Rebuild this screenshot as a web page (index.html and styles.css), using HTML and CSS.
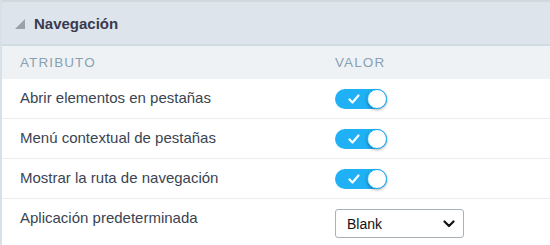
FILE: index.html
```html
<!DOCTYPE html>
<html>
<head>
<meta charset="utf-8">
<link rel="stylesheet" href="styles.css">
</head>
<body>
<div class="panel">
  <div class="panel-head">
    <span class="tri"></span>
    <span class="title">Navegación</span>
  </div>
  <div class="thead">
    <div class="col-a">Atributo</div>
    <div class="col-b">Valor</div>
  </div>
  <div class="row">
    <div class="col-a">Abrir elementos en pestañas</div>
    <div class="col-b"><span class="toggle"><svg class="check" viewBox="0 0 12 10" width="12" height="10"><path d="M1.5 5.5 L4.5 8.5 L10.5 1.5" fill="none" stroke="#fff" stroke-width="2.2" stroke-linecap="round" stroke-linejoin="round"/></svg><span class="knob"></span></span></div>
  </div>
  <div class="row">
    <div class="col-a">Menú contextual de pestañas</div>
    <div class="col-b"><span class="toggle"><svg class="check" viewBox="0 0 12 10" width="12" height="10"><path d="M1.5 5.5 L4.5 8.5 L10.5 1.5" fill="none" stroke="#fff" stroke-width="2.2" stroke-linecap="round" stroke-linejoin="round"/></svg><span class="knob"></span></span></div>
  </div>
  <div class="row">
    <div class="col-a">Mostrar la ruta de navegación</div>
    <div class="col-b"><span class="toggle"><svg class="check" viewBox="0 0 12 10" width="12" height="10"><path d="M1.5 5.5 L4.5 8.5 L10.5 1.5" fill="none" stroke="#fff" stroke-width="2.2" stroke-linecap="round" stroke-linejoin="round"/></svg><span class="knob"></span></span></div>
  </div>
  <div class="row last">
    <div class="col-a">Aplicación predeterminada</div>
    <div class="col-b">
      <div class="select">
        <span>Blank</span>
        <svg viewBox="0 0 12 8" width="12" height="8"><path d="M1.5 1.5 L6 6 L10.5 1.5" fill="none" stroke="#111" stroke-width="2.2" stroke-linecap="round" stroke-linejoin="round"/></svg>
      </div>
    </div>
  </div>
</div>
</body>
</html>
```

FILE: styles.css
```css
* { box-sizing: border-box; }
html, body { margin: 0; padding: 0; background: #fff; }
body { font-family: "Liberation Sans", Arial, sans-serif; width: 550px; height: 245px; overflow: hidden; }
.panel { border-left: 2px solid #d8e1e8; }
.panel-head {
  height: 46px;
  background: #dee4ec;
  border-top: 2px solid #d0dade;
  border-bottom: 2px solid #d0dce0;
  display: flex;
  align-items: center;
  padding-left: 13px;
}
.tri {
  width: 0; height: 0;
  border-left: 10px solid transparent;
  border-bottom: 10px solid #9aa1a8;
  margin-right: 9px;
  margin-top: 1px;
}
.title { font-weight: bold; font-size: 15px; color: #383a4e; }
.thead {
  height: 33px;
  background: #eef2f5;
  display: flex;
  align-items: center;
  font-size: 13.5px;
  text-transform: uppercase;
  letter-spacing: 1.1px;
  color: #88a0b2;
}
.col-a { width: 333px; padding-left: 18px; }
.col-b { flex: 1; display: flex; align-items: center; }
.row {
  height: 40px;
  border-bottom: 1px solid #e9ecf1;
  display: flex;
  align-items: center;
  font-size: 15px;
  color: #3a4452;
}
.row .col-a { margin-top: -2px; }
.row.last { border-bottom: none; height: 46px; align-items: flex-start; padding-top: 9px; }
.row.last .col-a { margin-top: 1px; }
.row.last .col-b { padding-top: 1px; }
.toggle {
  position: relative;
  width: 52px; height: 20px;
  border-radius: 10px;
  background: #1fb0f6;
  display: inline-flex;
  align-items: center;
}
.check { margin-left: 13px; }
.knob {
  position: absolute;
  right: 0; top: 0;
  width: 20px; height: 20px;
  border-radius: 50%;
  background: #fff;
  border: 1px solid #1fb0f6;
  box-shadow: 0 1px 3px rgba(0,0,0,0.35);
}
.select {
  width: 129px; height: 29px;
  border: 1px solid #a9b0b8;
  border-radius: 3px;
  display: flex;
  align-items: center;
  justify-content: space-between;
  padding: 0 8px 0 11px;
  font-size: 14px;
  color: #111;
}
```
